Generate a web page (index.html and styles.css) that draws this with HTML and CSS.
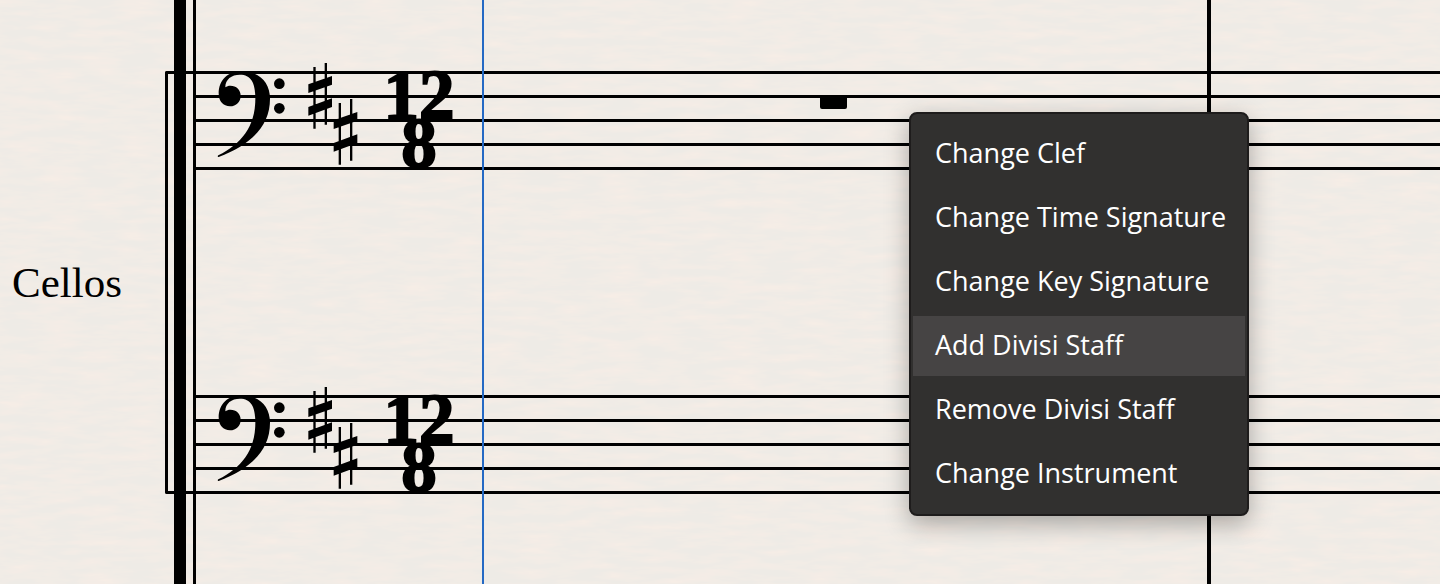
FILE: index.html
```html
<!DOCTYPE html>
<html lang="en">
<head>
    <meta charset="UTF-8">
    <meta name="viewport" content="width=device-width, initial-scale=1.0">
    <title>Score</title>
    <link rel="stylesheet" href="styles.css">
</head>
<body>
    <!-- shared music symbols -->
    <svg class="defs" aria-hidden="true">
        <filter id="grain" x="0" y="0" width="100%" height="100%">
            <feTurbulence type="fractalNoise" baseFrequency="0.025 0.13" numOctaves="4" seed="4"/>
            <feColorMatrix values="0 0 0 0 0.94  0 0 0 0 0.85  0 0 0 0 0.79  1.5 0 0 0 -0.5"/>
        </filter>
        <symbol id="bass-clef" viewBox="138 -9 510 432">
            <path d="M206 321 C298 286 360 232 360 146 C360 97 328 64 276 64 C232 64 206 92 206 130 C206 154 220 169 240 169 C259 169 272 155 272 137 C272 119 259 107 241 107 C235 107 230 109 226 112 C226 88 244 74 270 74 C302 74 316 96 316 146 C316 230 274 281 205 316 C202 318 203 322 206 321 Z"/>
            <circle cx="388" cy="101" r="16"/>
            <circle cx="388" cy="175" r="16"/>
            <g id="sharp">
                <path d="M490 51h7v185h-7z M524 39h7v185h-7z M475 103L546 78V104L475 129z M475 171L546 145V171L475 197z"/>
            </g>
            <use href="#sharp" x="76" y="108"/>
        </symbol>
    </svg>

    <main class="score">
        <svg class="paper" aria-hidden="true"><rect width="100%" height="100%" filter="url(#grain)"/></svg>

        <div class="names">
            <span class="instrument">Cellos</span>
        </div>

        <div class="brackets">
            <div class="thick"></div>
            <div class="thin"></div>
            <div class="sub-bracket"></div>
        </div>

        <div class="staves">
            <div class="staff">
                <svg class="clef" role="img" aria-label="Bass clef, two sharps"><use href="#bass-clef"/></svg>
                <div class="time"><span>12</span><span>8</span></div>
                <div class="measure"><div class="rest"></div></div>
                <div class="next-measure"></div>
            </div>
            <div class="staff">
                <svg class="clef" role="img" aria-label="Bass clef, two sharps"><use href="#bass-clef"/></svg>
                <div class="time"><span>12</span><span>8</span></div>
                <div class="measure"></div>
                <div class="next-measure"></div>
            </div>
            <div class="playhead"></div>
            <div class="barline"></div>
        </div>

        <div class="menu" role="menu">
            <button type="button" role="menuitem">Change Clef</button>
            <button type="button" role="menuitem">Change Time Signature</button>
            <button type="button" role="menuitem">Change Key Signature</button>
            <button type="button" role="menuitem" class="active">Add Divisi Staff</button>
            <button type="button" role="menuitem">Remove Divisi Staff</button>
            <button type="button" role="menuitem">Change Instrument</button>
        </div>
    </main>
</body>
</html>
```

FILE: styles.css
```css
* {
  box-sizing: border-box;
}

body {
  margin: 0;
  background-color: #eeebe6;
  color: #000;
}

.defs {
  position: absolute;
  width: 0;
  height: 0;
}

.score {
  position: relative;
  display: flex;
  min-height: 100vh;
  overflow: hidden;
}

/* paper texture behind the music */
.paper {
  position: absolute;
  left: 0;
  top: 0;
  width: 100%;
  height: 100%;
}

/* Instrument name */
.names {
  position: relative;
  width: 165px;
  padding: 259px 0 0 12px;
}

.instrument {
  font-family: "Liberation Serif", serif;
  font-size: 43px;
  line-height: 48px;
}

/* Left bracket lines */
.brackets {
  position: relative;
  display: flex;
  gap: 7px;
  width: 31px;
  padding-left: 9px;
}

.thick {
  width: 12px;
  background-color: #000;
}

.thin {
  width: 3px;
  background-color: #000;
}

.sub-bracket {
  position: absolute;
  left: 0;
  top: 71px;
  width: 31px;
  height: 423px;
  border: 3px solid #000;
  border-right: none;
  border-radius: 2px 0 0 2px;
}

/* Staves */
.staves {
  position: relative;
  flex: 1;
  display: flex;
  flex-direction: column;
  gap: 225px;
  padding: 71px 0 90px;
}

.staff {
  display: flex;
  align-items: center;
  height: 99px;
  background-image: repeating-linear-gradient(#000 0 3px, transparent 3px 24px);
}

.clef {
  width: 170px;
  height: 144px;
  margin-bottom: 3px;
}

.time {
  display: flex;
  flex-direction: column;
  align-items: center;
  width: 92px;
  padding: 0 0 4px 14px;
  font-family: "Liberation Serif", serif;
  font-size: 71px;
  font-weight: bold;
  line-height: 48px;
  -webkit-text-stroke: 2px #000;
}

.measure {
  flex: 1;
  display: flex;
  justify-content: center;
  align-self: flex-start;
  padding-top: 26px;
}

.rest {
  width: 27px;
  height: 12px;
  border-radius: 0 0 2px 2px;
  background-color: #000;
}

.next-measure {
  width: 231px;
}

.playhead {
  position: absolute;
  left: 286px;
  top: 0;
  bottom: 0;
  width: 2px;
  background-color: #2469c4;
}

.barline {
  position: absolute;
  right: 229px;
  top: 0;
  bottom: 0;
  width: 4px;
  background-color: #000;
}

/* Context menu */
.menu {
  position: absolute;
  left: 909px;
  top: 112px;
  display: flex;
  flex-direction: column;
  gap: 4px;
  width: 340px;
  padding: 10px 2px;
  border: 2px solid #1e1c1c;
  border-radius: 8px;
  background-color: #31302f;
  box-shadow: 0 8px 24px rgba(0, 0, 0, 0.3);
}

.menu button {
  height: 60px;
  padding: 0 22px 3px;
  border: none;
  background-color: transparent;
  color: #fff;
  font-family: "Open Sans", sans-serif;
  font-size: 27px;
  text-align: left;
  white-space: nowrap;
}

.menu button:hover,
.menu .active {
  background-color: #464444;
}
```
